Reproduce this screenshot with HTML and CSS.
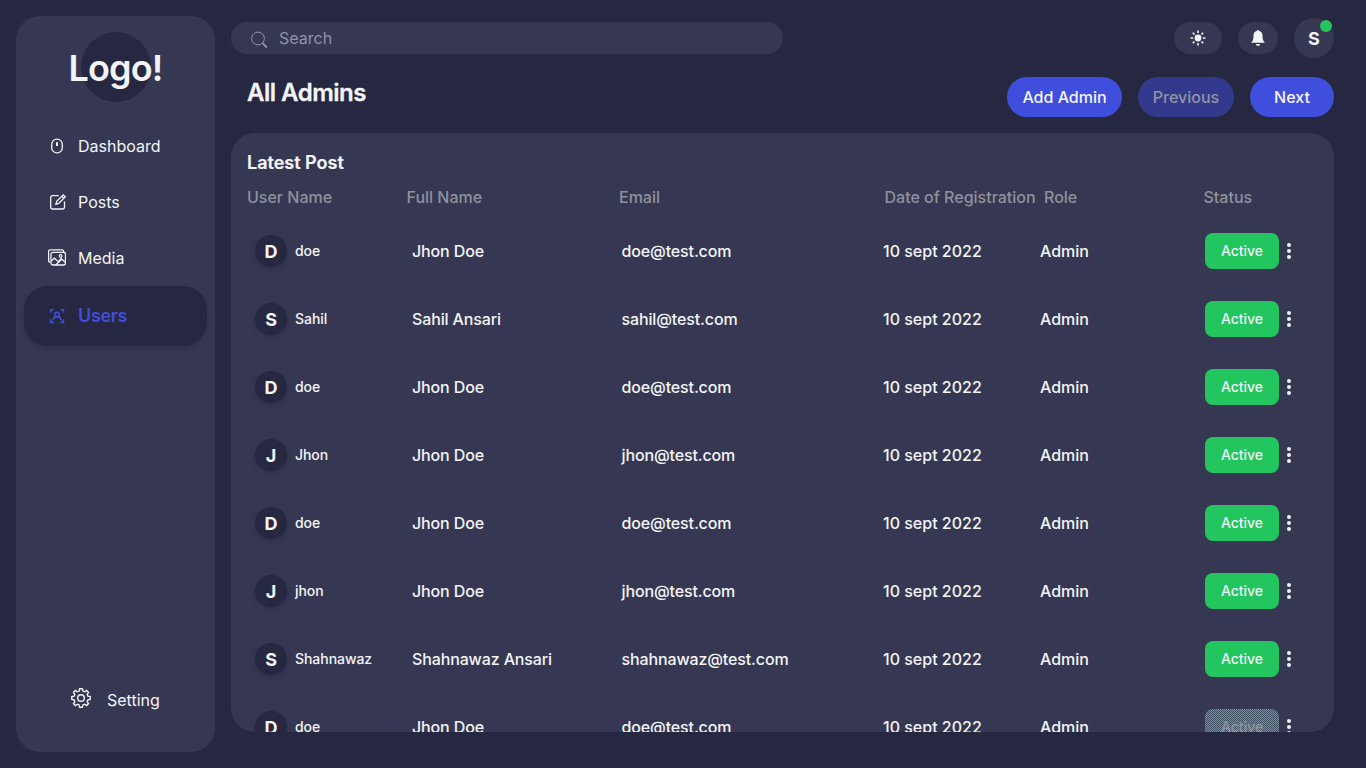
FILE: index.html
```
<!DOCTYPE html>
<html lang="en">
<head>
<meta charset="utf-8">
<title>All Admins</title>
<link rel="stylesheet" href="styles.css">
</head>
<body>
<aside class="sidebar">
  <div class="logo"><span class="logo-text">Logo!</span></div>
  <nav class="nav">
    <a class="nav-item"><svg class="icon" viewBox="0 0 18 18"><rect x="3.700" y="2.100" width="10.600" height="13.800" rx="5.200"/><path d="M9 5.300v3.700" stroke-width="2"/></svg><span>Dashboard</span></a>
    <a class="nav-item"><svg class="icon" viewBox="0 0 18 18"><path d="M10.700 2.700H4.500a1.800 1.800 0 0 0-1.800 1.800v9.700A1.800 1.800 0 0 0 4.500 16h10.200a1.800 1.800 0 0 0 1.800-1.800V8.400M7.900 11.200l.8-2.800 6.500-6.600 2.100 2-6.600 6.600zM13.700 3.300l2.100 2"/></svg><span>Posts</span></a>
    <a class="nav-item"><svg class="icon" viewBox="0 0 18 18"><path d="M2.300 13.300A1.800 1.800 0 0 1 .6 11.500V2.600A1.800 1.800 0 0 1 2.400.8h11.400a1.800 1.800 0 0 1 1.800 1.800v.6"/><rect x="3" y="3.400" width="14.500" height="12.600" rx="1.800"/><path d="M3.300 12l3.100-2.800 2.700 2.400 1 1 3-2.900 4.200 3.500M7.600 15.900l5.400-5"/><circle cx="12.600" cy="7" r="1.300"/></svg><span>Media</span></a>
    <a class="nav-item active"><svg class="icon" viewBox="0 0 18 18"><path d="M2.700 5.600V2.700h2.900M12.500 2.700h2.900v2.900M15.400 12.500v2.900h-2.900M5.600 15.400H2.700v-2.900"/><circle cx="9" cy="7.600" r="2.200"/><path d="M5.200 13.200c0-2.200 1.500-3.500 3.800-3.500s3.800 1.300 3.800 3.500"/></svg><span>Users</span></a>
  </nav>
  <a class="setting"><svg class="gear" viewBox="0 0 20 20"><path d="M8.600.8h2.800l.5 2.300 1.700.7 2-1.300 1.900 1.900-1.300 2 .7 1.700 2.300.5v2.800l-2.300.5-.7 1.700 1.300 2-1.900 1.900-2-1.300-1.700.7-.5 2.300H8.600l-.5-2.300-1.700-.7-2 1.300-1.900-1.900 1.300-2-.7-1.700-2.300-.5V8.600l2.300-.5.700-1.700-1.300-2 1.900-1.900 2 1.300 1.700-.7z"/><circle cx="10" cy="10" r="3.300"/></svg><span>Setting</span></a>
</aside>
<main class="main">
  <header class="topbar">
    <div class="search"><svg class="search-icon" viewBox="0 0 18 18"><circle cx="8" cy="7.500" r="6.400"/><path d="M12.600 12.200l4.300 4.300" stroke-width="1.800"/></svg><span>Search</span></div>
    <div class="actions">
      <button class="pill theme"><svg viewBox="0 0 16 16"><circle cx="8" cy="8" r="3.400"/><path d="M8 .6v2.500M8 12.900v2.500M.6 8h2.500M12.900 8h2.500M2.800 2.800l1.700 1.700M11.500 11.500l1.700 1.700M2.800 13.200l1.700-1.700M11.500 4.500l1.700-1.700" stroke="currentColor" stroke-width="1.600"/></svg></button>
      <button class="pill bell"><svg viewBox="0 0 16 16"><path d="M8 0a1.100 1.100 0 0 0-1.100 1.100C4.700 1.600 3.500 3.300 3.500 5.500c0 4-.7 5.500-2.400 7.200h13.800c-1.700-1.700-2.400-3.200-2.400-7.200 0-2.200-1.200-3.900-3.400-4.400A1.100 1.100 0 0 0 8 0zM6 14h4a2 2 0 0 1-4 0z"/></svg></button>
      <div class="profile">S<span class="online"></span></div>
    </div>
  </header>
  <div class="heading">
    <h1>All Admins</h1>
    <div class="buttons"><button class="btn add">Add Admin</button><button class="btn previous">Previous</button><button class="btn next">Next</button></div>
  </div>
  <section class="card">
    <h2>Latest Post</h2>
    <div class="columns"><span>User Name</span><span>Full Name</span><span>Email</span><span>Date of Registration</span><span>Role</span><span>Status</span></div>
    <div class="rows" id="rows"></div>
  </section>
</main>
<script src="app.js"></script>
</body>
</html>
```
FILE: styles.css
```
* { box-sizing: border-box; }
body {
  margin: 0;
  height: 768px;
  padding: 16px 32px 16px 16px;
  display: flex;
  gap: 16px;
  overflow: hidden;
  background: #262842;
  color: #f3f4f6;
  font: 400 16px/24px Inter, "Liberation Sans", sans-serif;
}
button { border: 0; padding: 0; font: inherit; color: inherit; }
h1, h2 { margin: 0; }
svg { display: block; flex: none; fill: none; stroke: currentColor; }

.sidebar {
  width: 199px;
  height: 736px;
  flex: none;
  display: flex;
  flex-direction: column;
  background: #363853;
  border-radius: 24px;
  padding: 16px 8px 40px;
}
.logo {
  width: 70px;
  height: 70px;
  margin: 0 auto;
  display: flex;
  align-items: center;
  justify-content: center;
  background: #262842;
  border-radius: 50%;
}
.logo-text { padding-top: 1px; font-size: 36px; line-height: 40px; font-weight: 600; letter-spacing: -.9px; white-space: nowrap; }
.nav { margin-top: 16px; }
.nav-item { height: 56px; padding-left: 24px; display: flex; align-items: center; gap: 12px; }
.icon { width: 18px; height: 18px; stroke-width: 1.3; }
.active {
  height: 60px;
  background: #262842;
  border-radius: 24px;
  color: #404edd;
  font-size: 18px;
  font-weight: 600;
  letter-spacing: -.35px;
  box-shadow: 0 2px 4px rgba(38, 40, 66, .55);
}
.active .icon { stroke-width: 1.6; }
.setting { margin-top: auto; padding-left: 47px; display: flex; align-items: center; gap: 16px; }
.gear { width: 20px; height: 20px; stroke-width: 1.4; margin-top: -4px; }

.main { flex: 1; min-width: 0; }
.topbar { height: 44px; display: flex; justify-content: space-between; align-items: center; }
.search {
  width: 552px;
  height: 32px;
  padding-left: 19px;
  display: flex;
  align-items: center;
  gap: 11px;
  border-radius: 16px;
  background: #363853;
  color: #9293a0;
}
.search-icon { width: 18px; height: 18px; margin-top: 4px; }
.actions { display: flex; align-items: center; gap: 16px; }
.pill { height: 32px; display: flex; align-items: center; justify-content: center; border-radius: 16px; background: #363853; }
.pill svg { width: 16px; height: 16px; fill: currentColor; stroke: none; }
.theme { width: 48px; }
.bell { width: 40px; }
.profile {
  position: relative;
  width: 40px;
  height: 40px;
  border-radius: 50%;
  background: #363853;
  font-size: 18px;
  line-height: 41px;
  font-weight: 700;
  text-align: center;
}
.online { position: absolute; top: 2px; right: 2px; width: 12px; height: 12px; border-radius: 50%; background: #22c55e; }

.heading { height: 73px; padding-left: 16px; display: flex; justify-content: space-between; align-items: flex-start; }
h1 { padding-top: 17px; font-size: 24px; line-height: 32px; font-weight: 600; letter-spacing: -.5px; -webkit-text-stroke: .3px currentColor; }
.buttons { display: flex; gap: 16px; padding-top: 17px; }
.btn { height: 40px; border-radius: 20px; background: #404edd; font-weight: 500; }
.add { width: 115px; }
.previous { width: 96px; background: #333a8d; color: #9193a2; }
.next { width: 84px; }

.card {
  height: 599px;
  padding: 16px 16px 0;
  overflow: hidden;
  border-radius: 24px;
  background: #363853;
}
h2 { font-size: 18px; line-height: 28px; font-weight: 600; -webkit-text-stroke: .2px currentColor; }
.columns {
  height: 40px;
  display: grid;
  grid-template-columns: 159.500px 212.500px 265.500px 159.500px 159.500px auto;
  align-items: center;
  color: #8f919d;
  font-weight: 500;
  white-space: nowrap;
}
.row {
  height: 68px;
  display: grid;
  grid-template-columns: 165px 209.500px 261.500px 157px 165px 74px 20px;
  align-items: center;
  font-weight: 500;
}
.name, .email { letter-spacing: -.13px; }
.user { display: flex; align-items: center; gap: 8px; padding-left: 8px; font-size: 14px; letter-spacing: -.05px; }
.avatar {
  width: 32px;
  height: 32px;
  border-radius: 50%;
  background: #262842;
  box-shadow: 0 2px 4px rgba(38, 40, 66, .6);
  font-size: 18px;
  line-height: 33px;
  font-weight: 700;
  text-align: center;
}
.status {
  height: 36px;
  border-radius: 8px;
  background: #22c55e;
  font-size: 14px;
  line-height: 36px;
  text-align: center;
}
.muted {
  color: #92949f;
  background: repeating-conic-gradient(#22c55e 0 25%, #3e5062 0 50%) 0 0 / 2px 2px;
}
.dots { width: 4px; height: 16px; margin-left: 8px; fill: currentColor; stroke: none; }
```
FILE: app.js
```
const people = [
  ['doe', 'Jhon Doe', 'doe@test.com'],
  ['Sahil', 'Sahil Ansari', 'sahil@test.com'],
  ['doe', 'Jhon Doe', 'doe@test.com'],
  ['Jhon', 'Jhon Doe', 'jhon@test.com'],
  ['doe', 'Jhon Doe', 'doe@test.com'],
  ['jhon', 'Jhon Doe', 'jhon@test.com'],
  ['Shahnawaz', 'Shahnawaz Ansari', 'shahnawaz@test.com'],
  ['doe', 'Jhon Doe', 'doe@test.com', true]
];
document.getElementById('rows').innerHTML = people.map(([user, name, email, muted]) => `
  <div class="row">
    <div class="user"><span class="avatar">${user[0].toUpperCase()}</span><span>${user}</span></div>
    <span class="name">${name}</span><span class="email">${email}</span><span>10 sept 2022</span><span>Admin</span>
    <span class="status${muted ? ' muted' : ''}">Active</span>
    <svg class="dots" viewBox="0 0 4 16"><circle cx="2" cy="2" r="2"/><circle cx="2" cy="8" r="2"/><circle cx="2" cy="14" r="2"/></svg>
  </div>`).join('');
```
